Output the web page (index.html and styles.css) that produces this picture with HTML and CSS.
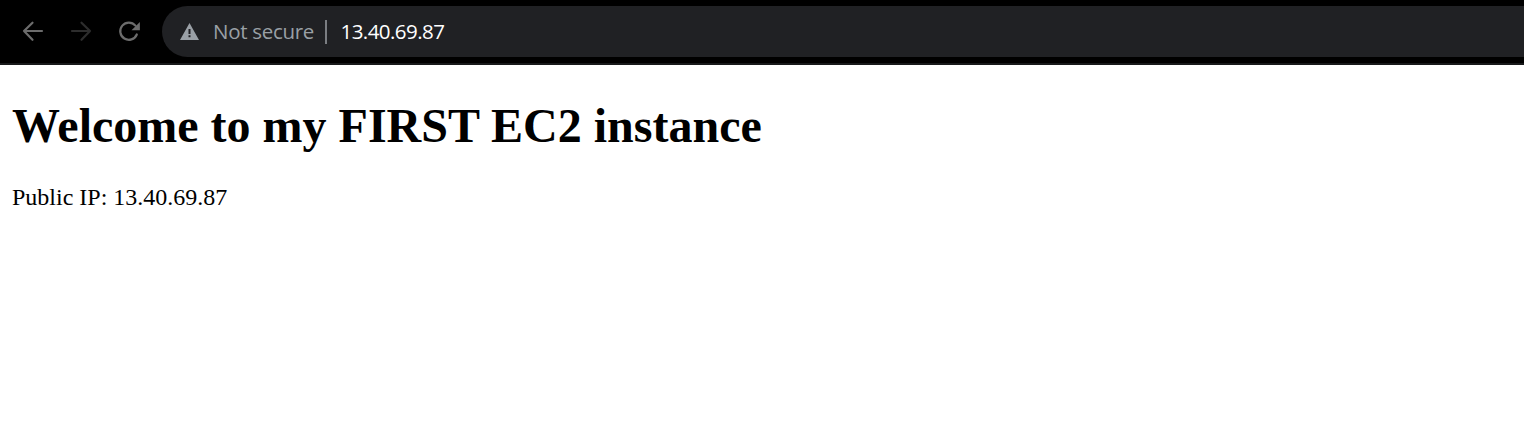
FILE: index.html
```html
<!DOCTYPE html>
<html lang="en">
<head>
<meta charset="utf-8">
<title>13.40.69.87</title>
<link rel="stylesheet" href="styles.css">
</head>
<body>
<header class="toolbar">
  <nav class="nav">
    <svg class="icon" viewBox="0 0 28 28"><path class="arrow" d="M23 14H5M13.5 5.7 5 14l8.5 8.8"/></svg>
    <svg class="icon disabled" viewBox="0 0 28 28"><path class="arrow" d="M5 14h18M14.5 5.7 23 14l-8.5 8.8"/></svg>
    <svg class="icon" viewBox="0 0 28 28"><path class="arrow" d="M21.8 17.5A8.6 8.6 0 1 1 20.4 8.6"/><path fill="currentColor" d="M24.9 5v8.2h-8.4z"/></svg>
  </nav>
  <div class="address">
    <svg class="warning" viewBox="0 0 19 17"><path fill="#9aa0a6" fill-rule="evenodd" d="M9.5 0 19 17H0zM8.5 6v5h2V6zM8.5 12.3v2h2v-2z"/></svg>
    <span class="status">Not secure</span>
    <span class="divider"></span>
    <span class="url">13.40.69.87</span>
  </div>
</header>
<main class="page">
  <h1 class="title">Welcome to my FIRST EC2 instance</h1>
  <p class="ip">Public IP: 13.40.69.87</p>
</main>
</body>
</html>
```
FILE: styles.css
```css
body { margin: 0; background: #fff; color: #000; }
.toolbar { box-sizing: border-box; display: flex; height: 65px; padding-top: 6px; background: #000; border-bottom: 2px solid #18191a; }
.nav { display: flex; align-items: center; gap: 20px; height: 50px; padding-left: 19px; }
.icon { width: 28px; height: 28px; display: block; color: #6c6c6c; }
.disabled { color: #2d2d2d; }
.arrow { fill: none; stroke: currentColor; stroke-width: 2.2; stroke-linecap: round; stroke-linejoin: round; }
.address { display: flex; align-items: center; flex: 1; height: 51px; box-sizing: border-box; margin-left: 19px; padding-left: 18px; background: #202124; border-radius: 26px 0 0 26px; font: 20.5px/28px "Open Sans", "Noto Sans", sans-serif; white-space: nowrap; }
.warning { width: 19px; height: 17px; }
.status { width: 101px; margin-left: 14px; padding-bottom: 2px; color: #9aa0a6; letter-spacing: -0.3px; }
.divider { width: 2px; height: 24px; margin-left: 11px; background: #7b7e82; }
.url { margin-left: 13.5px; padding-bottom: 2px; color: #fff; letter-spacing: -0.55px; }
.page { padding: 33px 12px; font-family: "Liberation Serif", serif; }
.title { margin: 0; font-size: 48px; line-height: 56px; }
.ip { margin: 29px 0 0; font-size: 24px; line-height: 28px; }
```
